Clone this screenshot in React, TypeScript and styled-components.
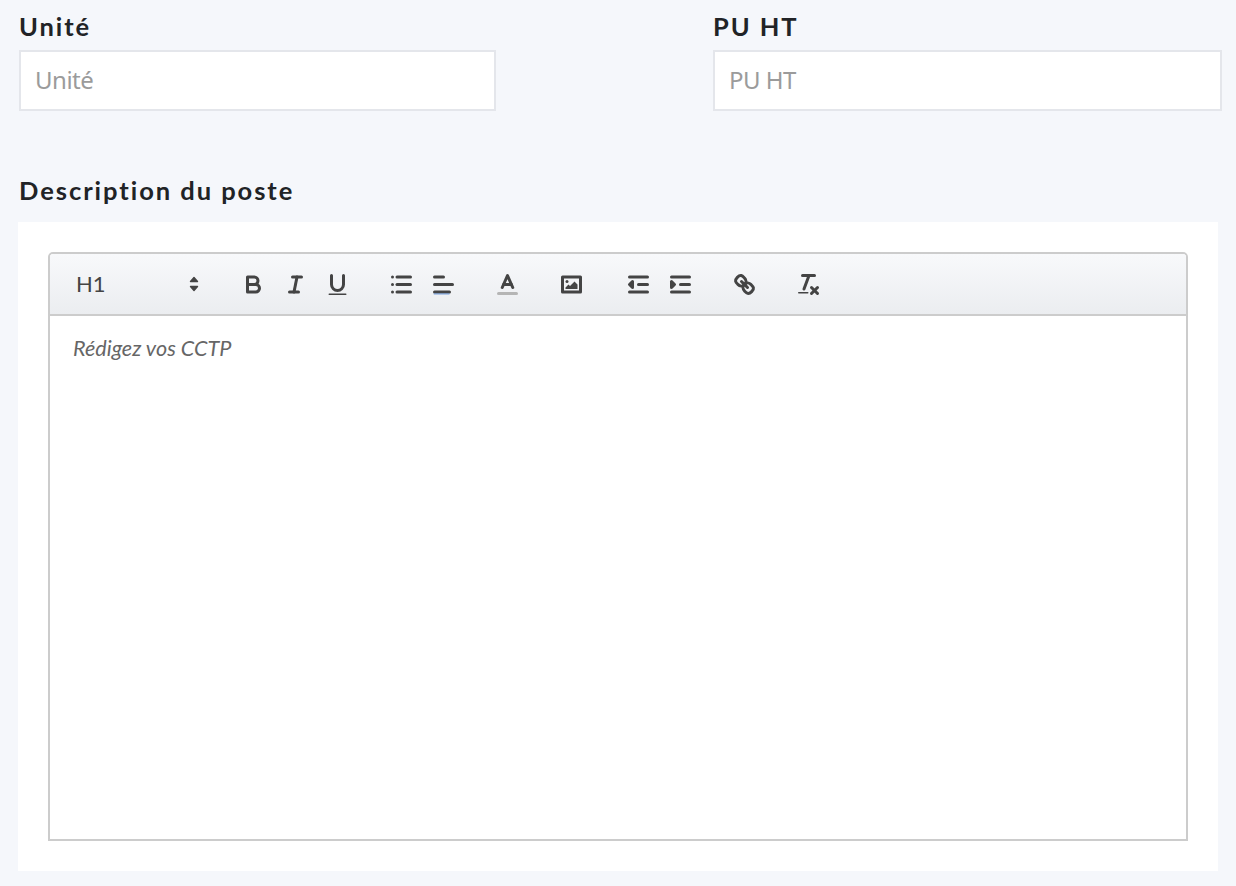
import React from 'react';
import styled, { createGlobalStyle } from 'styled-components';

const GlobalStyle = createGlobalStyle`
  * {
    box-sizing: border-box;
  }
  body {
    margin: 0;
    background-color: #f5f7fb;
    font-family: 'Lato', 'Liberation Sans', sans-serif;
  }
`;

const Page = styled.div`
  width: 1236px;
  height: 886px;
  overflow: hidden;
  padding-top: 11px;
`;

const Fields = styled.div`
  display: flex;
  gap: 217px;
  padding-left: 19px;
`;

const Field = styled.div<{ $width: number }>`
  display: flex;
  flex-direction: column;
  width: ${(p) => p.$width}px;
`;

const Label = styled.label`
  display: block;
  height: 39px;
  font-size: 25.5px;
  line-height: 30px;
  font-weight: 700;
  letter-spacing: 1.95px;
  color: #212326;
`;

const TextInput = styled.input`
  width: 100%;
  height: 61px;
  padding: 0 14px 3px;
  border: 2px solid #e4e6eb;
  border-radius: 0;
  background: #fff;
  outline: none;
  font-family: 'Noto Sans', sans-serif;
  font-size: 24px;
  letter-spacing: -0.5px;
  &::placeholder {
    color: #9b9b9b;
    opacity: 1;
  }
`;

const SectionLabel = styled(Label)`
  margin: 64px 0 0 19px;
  height: 47px;
`;

const Card = styled.div`
  width: 1200px;
  height: 649px;
  margin-left: 18px;
  padding: 30px;
  background: #fff;
`;

const Editor = styled.div`
  display: flex;
  flex-direction: column;
  height: 589px;
  border: 2px solid #ccc;
  border-radius: 5px 5px 0 0;
`;

const Toolbar = styled.div`
  display: flex;
  align-items: center;
  flex: none;
  height: 62px;
  padding-left: 14px;
  border-bottom: 2px solid #ccc;
  background: linear-gradient(#f8f9fb, #ebedf0);
  border-radius: 3px 3px 0 0;
`;

const Picker = styled.div`
  display: flex;
  align-items: center;
  justify-content: space-between;
  width: 147px;
  height: 36px;
  padding: 0 12px 2px;
  font-size: 22px;
  color: #444;
`;

const Group = styled.div<{ $gap?: number }>`
  display: flex;
  margin-left: ${(p) => p.$gap ?? 22}px;
`;

const IconButton = styled.button`
  display: flex;
  align-items: center;
  justify-content: center;
  width: 42px;
  height: 36px;
  padding: 0;
  border: 0;
  background: none;
  svg {
    width: 27px;
    height: 27px;
    fill: none;
    stroke: #444;
    stroke-width: 2;
    stroke-linecap: round;
    stroke-linejoin: round;
  }
  svg .fill {
    fill: #444;
    stroke: none;
  }
  svg .solid {
    fill: #444;
  }
  svg .label {
    stroke: #b5b5b5;
  }
  svg .accent {
    stroke: #5b8fd9;
    stroke-width: 0.6;
    stroke-linecap: butt;
  }
`;

const ArrowIcon = styled.svg`
  width: 10px;
  height: 16px;
  margin-top: 2px;
  fill: #444;
  stroke: #444;
  stroke-width: 1.4;
  stroke-linejoin: round;
`;

const Body = styled.div`
  flex: 1;
  padding: 18px 23px;
  font-size: 21.6px;
  line-height: 28px;
  font-style: italic;
  color: #666;
`;

export default function App() {
  return (
    <Page>
      <GlobalStyle />
      <Fields>
        <Field $width={477}>
          <Label>Unité</Label>
          <TextInput placeholder="Unité" />
        </Field>
        <Field $width={509}>
          <Label>PU HT</Label>
          <TextInput placeholder="PU HT" />
        </Field>
      </Fields>
      <SectionLabel>Description du poste</SectionLabel>
      <Card>
        <Editor>
          <Toolbar>
            <Picker>
              H1
              <ArrowIcon viewBox="0 0 10 16">
                <path d="M5 1.5 L8.5 5.5 H1.5 Z M5 14.5 L1.5 10.5 H8.5 Z" />
              </ArrowIcon>
            </Picker>
            <Group $gap={21.5}>
              <IconButton>
                <svg viewBox="0 0 18 18">
                  <path d="M5,4H9.5A2.5,2.5,0,0,1,12,6.5v0A2.5,2.5,0,0,1,9.5,9H5A0,0,0,0,1,5,9V4A0,0,0,0,1,5,4Z" />
                  <path d="M5,9h5.5A2.5,2.5,0,0,1,13,11.5v0A2.5,2.5,0,0,1,10.5,14H5a0,0,0,0,1,0,0V9A0,0,0,0,1,5,9Z" />
                </svg>
              </IconButton>
              <IconButton>
                <svg viewBox="0 0 18 18">
                  <line x1="7" x2="13" y1="4" y2="4" />
                  <line x1="5" x2="11" y1="14" y2="14" />
                  <line x1="8" x2="10" y1="14" y2="4" />
                </svg>
              </IconButton>
              <IconButton>
                <svg viewBox="0 0 18 18">
                  <path d="M5,3V9a4.012,4.012,0,0,0,4,4H9a4.012,4.012,0,0,0,4-4V3" />
                  <rect className="fill" height="1" rx="0.5" ry="0.5" width="12" x="3" y="15" />
                </svg>
              </IconButton>
            </Group>
            <Group $gap={21.5}>
              <IconButton>
                <svg viewBox="0 0 18 18">
                  <line x1="6" x2="15" y1="4" y2="4" />
                  <line x1="6" x2="15" y1="9" y2="9" />
                  <line x1="6" x2="15" y1="14" y2="14" />
                  <line x1="3" x2="3" y1="4" y2="4" />
                  <line x1="3" x2="3" y1="9" y2="9" />
                  <line x1="3" x2="3" y1="14" y2="14" />
                </svg>
              </IconButton>
              <IconButton>
                <svg viewBox="0 0 18 18">
                  <line x1="3" x2="15" y1="9" y2="9" />
                  <line x1="3" x2="13" y1="14" y2="14" />
                  <line x1="3" x2="9" y1="4" y2="4" />
                  <line className="accent" x1="2.5" x2="13" y1="15.3" y2="15.3" />
                </svg>
              </IconButton>
            </Group>
            <Group>
              <IconButton>
                <svg viewBox="0 0 18 18">
                  <line className="label" x1="3" x2="15" y1="15" y2="15" />
                  <polyline points="5.5 11 9 3 12.5 11" />
                  <line x1="11.63" x2="6.38" y1="9" y2="9" />
                </svg>
              </IconButton>
            </Group>
            <Group>
              <IconButton>
                <svg viewBox="0 0 18 18">
                  <rect height="10" width="12" x="3" y="4" />
                  <circle className="fill" cx="6" cy="7" r="1" />
                  <polyline className="fill" points="5 12 5 11 7 9 8 10 11 7 13 9 13 12 5 12" />
                </svg>
              </IconButton>
            </Group>
            <Group $gap={25.5}>
              <IconButton>
                <svg viewBox="0 0 18 18">
                  <line x1="3" x2="15" y1="14" y2="14" />
                  <line x1="3" x2="15" y1="4" y2="4" />
                  <line x1="9" x2="15" y1="9" y2="9" />
                  <polyline className="solid" points="5 7 5 11 3 9 5 7" />
                </svg>
              </IconButton>
              <IconButton>
                <svg viewBox="0 0 18 18">
                  <line x1="3" x2="15" y1="14" y2="14" />
                  <line x1="3" x2="15" y1="4" y2="4" />
                  <line x1="9" x2="15" y1="9" y2="9" />
                  <polyline className="solid" points="3 7 3 11 5 9 3 7" />
                </svg>
              </IconButton>
            </Group>
            <Group>
              <IconButton>
                <svg viewBox="0 0 18 18">
                  <line x1="7" x2="11" y1="7" y2="11" />
                  <path d="M8.9,4.577a3.476,3.476,0,0,1,.36,4.679A3.476,3.476,0,0,1,4.577,8.9C3.185,7.5,2.035,6.4,4.217,4.217S7.5,3.185,8.9,4.577Z" />
                  <path d="M13.423,9.1a3.476,3.476,0,0,0-4.679-.36,3.476,3.476,0,0,0,.36,4.679c1.392,1.392,2.5,2.542,4.679.36S14.815,10.5,13.423,9.1Z" />
                </svg>
              </IconButton>
            </Group>
            <Group>
              <IconButton>
                <svg viewBox="0 0 18 18">
                  <line x1="5" x2="13" y1="3" y2="3" />
                  <line x1="6" x2="9.35" y1="12" y2="3" />
                  <line x1="11" x2="15" y1="11" y2="15" />
                  <line x1="15" x2="11" y1="11" y2="15" />
                  <rect className="fill" height="1" rx="0.5" ry="0.5" width="7" x="2" y="14" />
                </svg>
              </IconButton>
            </Group>
          </Toolbar>
          <Body>Rédigez vos CCTP</Body>
        </Editor>
      </Card>
    </Page>
  );
}
